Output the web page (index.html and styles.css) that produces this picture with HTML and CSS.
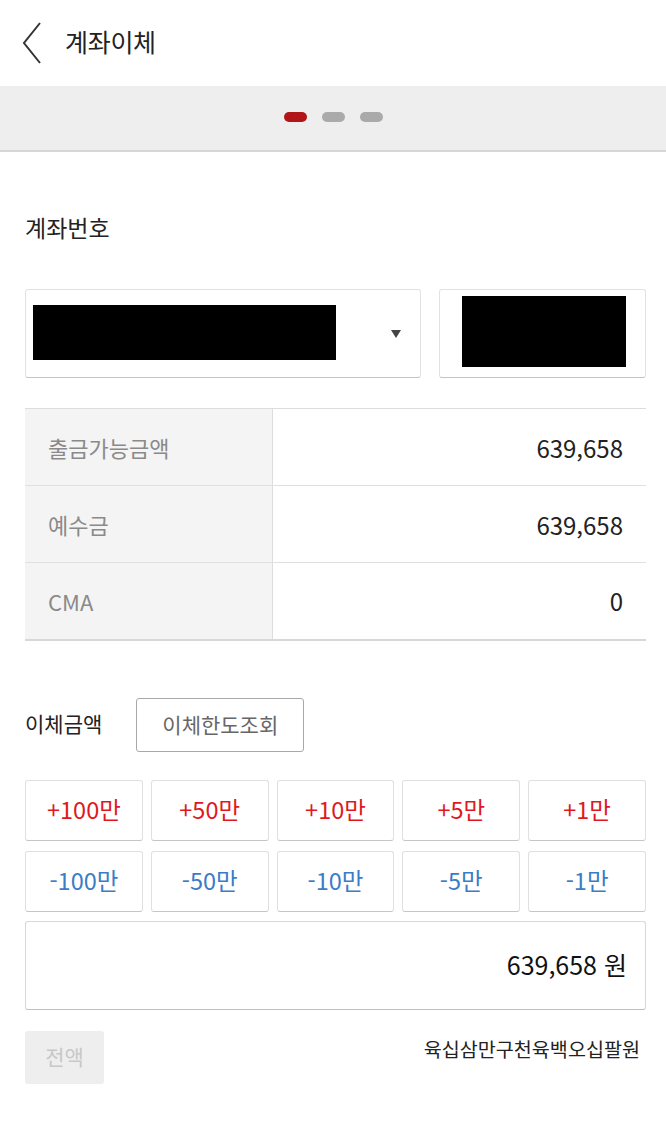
FILE: index.html
```html
<!DOCTYPE html>
<html lang="ko">
<head>
    <meta charset="UTF-8">
    <meta name="viewport" content="width=device-width, initial-scale=1.0">
    <title>계좌이체</title>
    <link rel="stylesheet" href="styles.css">
</head>
<body>
    <div class="header">
        <svg class="back" width="22" height="42" viewBox="0 0 22 42">
            <polyline points="19,1 3,21 19,41" fill="none" stroke="#333" stroke-width="2"/>
        </svg>
        <h1>계좌이체</h1>
    </div>

    <div class="pager">
        <span class="dot active"></span>
        <span class="dot"></span>
        <span class="dot"></span>
    </div>

    <div class="content">
        <div class="label first">계좌번호</div>

        <div class="account-row">
            <div class="account-select">
                <div class="mask mask-left"></div>
                <span class="caret"></span>
            </div>
            <div class="account-pw">
                <div class="mask mask-right"></div>
            </div>
        </div>

        <table class="balance">
            <tr>
                <th>출금가능금액</th>
                <td>639,658</td>
            </tr>
            <tr>
                <th>예수금</th>
                <td>639,658</td>
            </tr>
            <tr>
                <th>CMA</th>
                <td>0</td>
            </tr>
        </table>

        <div class="amount-head">
            <div class="label small">이체금액</div>
            <button class="limit-btn">이체한도조회</button>
        </div>

        <div class="quick">
            <button class="plus">+100만</button>
            <button class="plus">+50만</button>
            <button class="plus">+10만</button>
            <button class="plus">+5만</button>
            <button class="plus">+1만</button>
            <button class="minus">-100만</button>
            <button class="minus">-50만</button>
            <button class="minus">-10만</button>
            <button class="minus">-5만</button>
            <button class="minus">-1만</button>
        </div>

        <div class="amount-box">639,658 원</div>

        <div class="amount-foot">
            <button class="all-btn" disabled>전액</button>
            <div class="korean">육십삼만구천육백오십팔원</div>
        </div>
    </div>
</body>
</html>
```

FILE: styles.css
```css
body {
    margin: 0;
    font-family: "Noto Sans CJK KR", "Noto Sans", sans-serif;
    color: #222;
    background: #fff;
}

.header {
    height: 86px;
    display: flex;
    align-items: center;
    padding-left: 21px;
}

.back {
    margin-top: 0;
}

.header h1 {
    margin: 0 0 5px 22px;
    font-size: 25px;
    font-weight: 400;
    letter-spacing: -0.3px;
}

.pager {
    height: 61px;
    padding-bottom: 3px;
    background: #eeeeee;
    border-bottom: 2px solid #d6d6d6;
    display: flex;
    justify-content: center;
    align-items: center;
    gap: 15px;
}

.dot {
    width: 23px;
    height: 10px;
    border-radius: 5px;
    background: #aaaaaa;
}

.dot.active {
    background: #b01518;
}

.content {
    padding: 0 20px 0 25px;
}

.label {
    font-size: 23px;
    line-height: 34px;
}

.label.first {
    margin-top: 58px;
}

.label.small {
    font-size: 21px;
    margin-bottom: 4px;
}

.account-row {
    display: flex;
    gap: 18px;
    margin-top: 45px;
    height: 89px;
}

.account-select,
.account-pw {
    box-sizing: border-box;
    border: 1px solid #e2e2e2;
    border-bottom-color: #c4c4c4;
    border-radius: 3px;
    position: relative;
}

.account-select {
    width: 396px;
}

.account-pw {
    flex: 1;
}

.mask {
    position: absolute;
    background: #000;
}

.mask-left {
    left: 7px;
    top: 15px;
    width: 303px;
    height: 55px;
}

.mask-right {
    left: 22px;
    top: 6px;
    width: 164px;
    height: 71px;
}

.caret {
    position: absolute;
    right: 19px;
    top: 40px;
    width: 0;
    height: 0;
    border-left: 5px solid transparent;
    border-right: 5px solid transparent;
    border-top: 8px solid #444;
}

.balance {
    width: 100%;
    margin-top: 30px;
    border-collapse: collapse;
    border-top: 1px solid #dddddd;
    border-bottom: 2px solid #d8d8d8;
}

.balance tr {
    height: 77px;
    border-bottom: 1px solid #e0e0e0;
}

.balance th {
    width: 247px;
    box-sizing: border-box;
    background: #f4f4f4;
    border-right: 1px solid #dddddd;
    text-align: left;
    padding-left: 23px;
    font-weight: 400;
    font-size: 22px;
    color: #8a8a8a;
}

.balance td {
    text-align: right;
    padding-right: 23px;
    font-size: 24px;
    color: #222;
}

.amount-head {
    display: flex;
    align-items: center;
    margin-top: 57px;
}

.limit-btn {
    margin-left: 34px;
    width: 168px;
    height: 54px;
    background: #fff;
    border: 1px solid #a8a8a8;
    border-radius: 3px;
    font-family: inherit;
    font-size: 21px;
    color: #666;
    padding: 0 0 2px;
}

.quick {
    display: grid;
    grid-template-columns: repeat(5, 1fr);
    gap: 10px 8px;
    margin-top: 28px;
}

.quick button {
    height: 61px;
    background: #fff;
    border: 1px solid #e0e0e0;
    border-bottom-color: #c6c6c6;
    border-radius: 3px;
    font-family: inherit;
    font-size: 23.5px;
    padding: 0 0 3px;
}

.quick .plus {
    color: #e0181e;
}

.quick .minus {
    color: #3a7cc6;
}

.amount-box {
    margin-top: 9px;
    height: 89px;
    box-sizing: border-box;
    border: 1px solid #d8d8d8;
    border-bottom-color: #c0c0c0;
    border-radius: 3px;
    display: flex;
    align-items: center;
    justify-content: flex-end;
    padding: 0 18px 3px 0;
    font-size: 25px;
    color: #111;
}

.amount-foot {
    display: flex;
    justify-content: space-between;
    align-items: flex-start;
    margin-top: 21px;
}

.all-btn {
    width: 79px;
    height: 53px;
    background: #eeeeee;
    border: none;
    border-radius: 3px;
    font-family: inherit;
    font-size: 21px;
    color: #c8c8c8;
    padding: 0 0 3px;
}

.korean {
    font-size: 19.6px;
    margin-top: 3px;
    margin-right: 6px;
}
```
